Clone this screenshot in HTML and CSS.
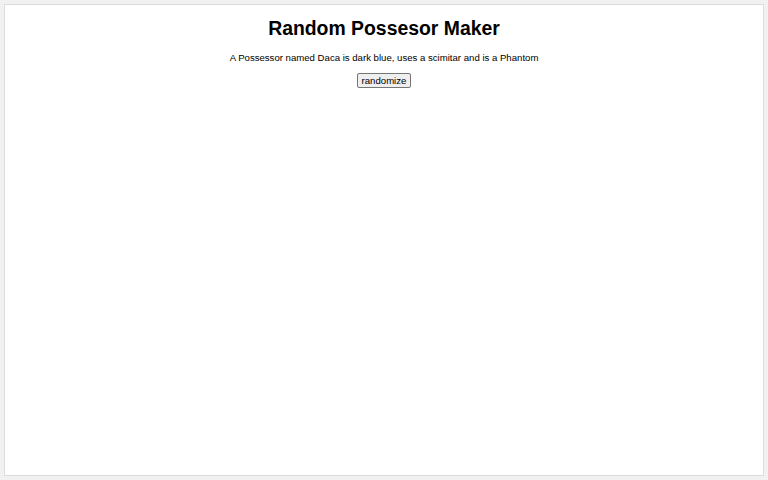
FILE: index.html
```html
<!DOCTYPE html>
<html>
<head>
<meta charset="utf-8">
<link rel="stylesheet" href="styles.css">
</head>
<body>
<div class="frame">
  <h1 class="title">Random Possesor Maker</h1>
  <p class="line">A Possessor named Daca is dark blue, uses a scimitar and is a Phantom</p>
  <button class="btn">randomize</button>
</div>
</body>
</html>
```
FILE: styles.css
```css
html, body {
  margin: 0;
  padding: 0;
  background: #f1f1f1;
}
body {
  padding: 4px;
  font-family: "Liberation Sans", Arial, sans-serif;
}
.frame {
  box-sizing: border-box;
  height: 472px;
  background: #fff;
  border: 1px solid #dcdcdc;
  text-align: center;
  color: #000;
}
.title {
  font-size: 19.4px;
  font-weight: bold;
  margin: 12px 0 0 0;
  line-height: 23px;
}
.line {
  font-size: 9.6px;
  margin: 12px 0 0 0;
  line-height: 12px;
}
.btn {
  margin-top: 9px;
  font-family: "Liberation Sans", Arial, sans-serif;
  font-size: 9.6px;
  line-height: 11px;
  padding: 1px 4px;
  background: #efefef;
  border: 1px solid #767676;
  border-radius: 2px;
  color: #000;
}
```
